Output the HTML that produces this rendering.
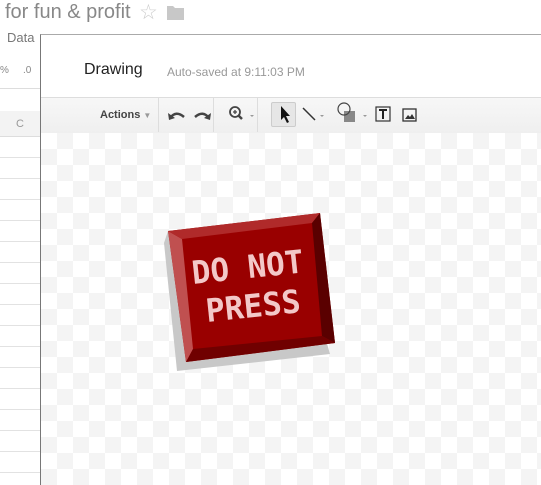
<!DOCTYPE html>
<html><head><meta charset="utf-8"><style>
html,body{margin:0;width:541px;height:485px;overflow:hidden;background:#fff;font-family:"Liberation Sans",sans-serif;position:relative}
.a{position:absolute}
</style></head><body>
<div class="a" style="left:5px;top:1px;font-size:20px;color:#888">for fun &amp; profit</div>
<div class="a" style="left:139px;top:0px;font-size:21px;color:#ccc">☆</div>
<svg class="a" style="left:166px;top:5px" width="20" height="16"><path d="M1 1h6l2 2h9v12H1z" fill="#c8c8c8"/></svg>
<div class="a" style="left:7px;top:30px;font-size:13px;color:#777">Data</div>
<div class="a" style="left:0;top:65px;font-size:10px;color:#888">%</div>
<div class="a" style="left:23px;top:65px;font-size:10px;color:#888">.0</div>
<div class="a" style="left:0;top:88px;width:40px;height:1px;background:#ddd"></div>
<div class="a" style="left:0;top:111px;width:40px;height:25px;background:#f3f3f3;border-bottom:1px solid #ddd"></div>
<div class="a" style="left:16px;top:118px;font-size:11px;color:#999">C</div>
<div class="a" style="left:0;top:137px;width:40px;height:348px;background:repeating-linear-gradient(#fff 0 20px,#e2e2e2 20px 21px)"></div>
<div class="a" style="left:40px;top:34px;width:501px;height:451px;background:#fff;border-left:1px solid #777;border-top:1px solid #aaa"></div>
<div class="a" style="left:84px;top:61px;font-size:16px;color:#222">Drawing</div>
<div class="a" style="left:167px;top:65px;font-size:12px;color:#999">Auto-saved at 9:11:03 PM</div>
<div class="a" style="left:41px;top:97px;width:500px;height:35px;background:linear-gradient(#f7f7f7,#efefef);border-top:1px solid #ddd;border-bottom:1px solid #ddd"></div>
<div class="a" style="left:100px;top:109px;font-size:11px;font-weight:bold;color:#444">Actions <span style="color:#999;font-size:8px">▼</span></div>
<div class="a" style="left:158px;top:98px;width:1px;height:34px;background:#ddd"></div>
<div class="a" style="left:213px;top:98px;width:1px;height:34px;background:#ddd"></div>
<div class="a" style="left:257px;top:98px;width:1px;height:34px;background:#ddd"></div>
<svg class="a" style="left:165px;top:105px" width="50" height="20"><path d="M5 13q6-8 14-1" stroke="#444" stroke-width="2.5" fill="none"/><path d="M3 8l1 7 6-2z" fill="#444"/><path d="M44 13q-6-8-14-1" stroke="#444" stroke-width="2.5" fill="none"/><path d="M46 8l-1 7-6-2z" fill="#444"/></svg>
<svg class="a" style="left:228px;top:104px" width="32" height="20"><circle cx="7" cy="8" r="5" fill="none" stroke="#444" stroke-width="1.8"/><path d="M10 11l4 4" stroke="#444" stroke-width="2.5"/><path d="M5 8h4M7 6v4" stroke="#444" stroke-width="1.3"/><path d="M22 11l2 2 2-2z" fill="#999"/></svg>
<div class="a" style="left:271px;top:102px;width:25px;height:25px;background:#e6e6e6;border:1px solid #ccc;border-radius:2px;box-sizing:border-box"></div>
<svg class="a" style="left:270px;top:100px" width="160" height="30"><path d="M11 6v14l3-3 3 6 2-1-3-6h4z" fill="#111"/><path d="M33 8l12 12" stroke="#333" stroke-width="1.5"/><path d="M50 15l2 2 2-2z" fill="#999"/><rect x="74" y="11" width="11" height="11" fill="#888"/><circle cx="74" cy="9" r="6" fill="none" stroke="#444" stroke-width="1.2"/><path d="M93 15l2 2 2-2z" fill="#999"/><rect x="106" y="7" width="14" height="14" fill="none" stroke="#333" stroke-width="1.2"/><path d="M109 10h8M113 10v9" stroke="#222" stroke-width="2"/><rect x="133" y="9" width="13" height="12" fill="none" stroke="#333" stroke-width="1.3"/><path d="M135 19l3-4 2 2 2-3 3 5z" fill="#333"/></svg>
<div class="a" style="left:41px;top:133px;width:500px;height:352px;background-color:#fff;background-image:linear-gradient(45deg,#f4f4f4 25%,transparent 25%,transparent 75%,#f4f4f4 75%),linear-gradient(45deg,#f4f4f4 25%,transparent 25%,transparent 75%,#f4f4f4 75%);background-size:32px 32px;background-position:0 0,16px 16px"></div>
<svg class="a" style="left:0;top:0" width="541" height="485">
<polygon points="164,243 177,371 330,354 326,340 186,362 168,231" fill="#c8c8c8"/>
<polygon points="168,231 320,213 335,343 186,362" fill="#990000"/>
<polygon points="168,231 182,239 193,349 186,362" fill="#c05050"/>
<polygon points="168,231 320,213 312,223 182,239" fill="#b02a2a"/>
<polygon points="320,213 335,343 322,336 312,223" fill="#5a0000"/>
<polygon points="186,362 335,343 322,336 193,349" fill="#700000"/>
<g font-family="DejaVu Sans Mono,monospace" font-weight="bold" font-size="32" fill="#f3c8c8">
<text transform="translate(193 284) rotate(-6)" textLength="112" lengthAdjust="spacingAndGlyphs">DO NOT</text>
<text transform="translate(207 322) rotate(-6)" textLength="95" lengthAdjust="spacingAndGlyphs">PRESS</text></g>
</svg>
</body></html>
